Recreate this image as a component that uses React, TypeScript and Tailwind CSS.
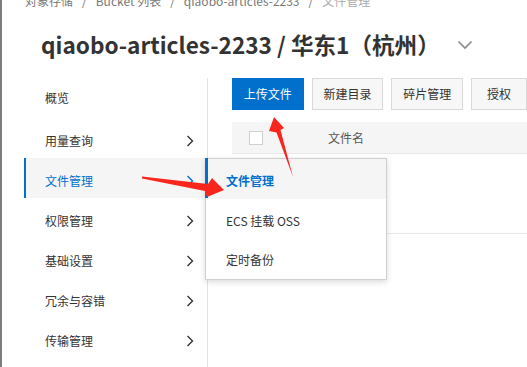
import React from "react";

const Chevron = ({ color = "#333" }: { color?: string }) => (
  <svg width="8" height="12" viewBox="0 0 8 12" fill="none">
    <polyline points="1.5,1 6.5,6 1.5,11" stroke={color} strokeWidth="1.4" />
  </svg>
);

const sideItems = ["用量查询", "文件管理", "权限管理", "基础设置", "冗余与容错", "传输管理"];

export default function App() {
  return (
    <div className="relative w-[527px] h-[367px] overflow-hidden bg-white border-l-2 border-[#7d7d7d] font-['Noto_Sans_CJK_SC','Noto_Sans',sans-serif] text-[#333]">
      {/* breadcrumb */}
      <div className="h-[25px] flex items-start">
        <div className="-mt-[6px] flex items-center pl-[23px] text-[12px] leading-[14px] text-[#777] whitespace-nowrap">
          <span>对象存储</span>
          <span className="mx-[9px]">/</span>
          <span>Bucket 列表</span>
          <span className="mx-[9px]">/</span>
          <span>qiaobo-articles-2233</span>
          <span className="mx-[9px]">/</span>
          <span className="text-[#aaa]">文件管理</span>
        </div>
      </div>
      {/* title */}
      <div className="h-[40px] flex items-center pl-[39px] whitespace-nowrap">
        <span className="text-[22.6px] font-bold text-[#333] leading-[30px]">qiaobo-articles-2233 / 华东1（杭州）</span>
        <svg className="ml-[17px]" width="16" height="10" viewBox="0 0 16 10" fill="none">
          <polyline points="1.5,1.5 8,8 14.5,1.5" stroke="#888" strokeWidth="1.6" />
        </svg>
      </div>
      {/* body */}
      <div className="mt-[13px] flex h-[289px]">
        <div className="ml-[22px] w-[181px] text-[12px]">
          <div className="h-[40px] flex items-center pl-[21px]">概览</div>
          {sideItems.map((t) => {
            const active = t === "文件管理";
            return (
              <div
                key={t}
                className={
                  active
                    ? "h-[40px] flex items-center pt-[6px] pl-[19px] pr-[11px] border-l-2 border-[#0070cc] bg-[#f5f5f5] text-[#0070cc]"
                    : "h-[40px] flex items-center pt-[6px] pl-[19px] pr-[11px] border-l-2 border-transparent"
                }
              >
                <span>{t}</span>
                <span className="ml-auto flex">
                  <Chevron color={active ? "#0070cc" : "#333"} />
                </span>
              </div>
            );
          })}
        </div>
        <div className="ml-[2px] w-[1px] bg-[#e3e3e3]" />
        <div className="flex-1 pl-[24px] min-w-0">
          <div className="flex gap-[8px] h-[32px] text-[12px] whitespace-nowrap">
            <div className="w-[74px] h-[32px] flex items-center justify-center bg-[#0070cc] text-white">上传文件</div>
            <div className="w-[74px] h-[32px] flex items-center justify-center bg-[#f7f7f7] border border-[#d9d9d9]">新建目录</div>
            <div className="w-[74px] h-[32px] flex items-center justify-center bg-[#f7f7f7] border border-[#d9d9d9]">碎片管理</div>
            <div className="w-[56px] shrink-0 h-[32px] flex items-center justify-center bg-[#f7f7f7] border border-[#d9d9d9]">授权</div>
          </div>
          <div className="mt-[12px] h-[32px] flex items-center bg-[#f5f5f5] border-b border-[#e8e8e8] text-[12px] text-[#555]">
            <div className="ml-[17px] w-[14px] h-[14px] bg-white border border-[#cfcfcf]" />
            <span className="ml-[65px]">文件名</span>
          </div>
          <div className="h-[80px] border-b border-[#e8e8e8]" />
        </div>
      </div>

      {/* dropdown */}
      <div className="absolute left-[203px] top-[158px] w-[182px] h-[122px] bg-white border border-[#cfcfcf] shadow-[0_2px_6px_rgba(0,0,0,0.15)] text-[12px]">
        <div className="relative h-[40px] flex items-center pt-[4px] pl-[20px] bg-[#f5f5f5] text-[#0070cc] font-bold">
          <div className="absolute -left-[1px] -top-[1px] w-[3px] h-[40px] bg-[#0070cc]" />
          文件管理
        </div>
        <div className="h-[40px] flex items-center pt-[4px] pl-[20px]">ECS 挂载 OSS</div>
        <div className="h-[40px] flex items-center pt-[2px] pl-[20px]">定时备份</div>
      </div>

      {/* annotation arrows */}
      <svg className="absolute -left-[2px] top-0 pointer-events-none" width="527" height="367" viewBox="0 0 527 367">
        <polygon points="142,176.5 208,184 212,178 224,190 207,197 205,191 142,178.5" fill="#f8261c" />
        <polygon points="274,117 284,128 280.5,130 293,177 276.5,132.5 269,131" fill="#f8261c" />
      </svg>
    </div>
  );
}
